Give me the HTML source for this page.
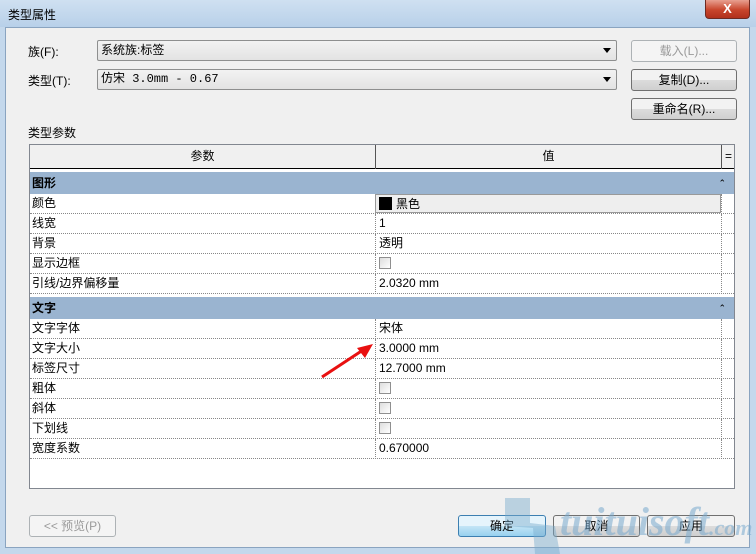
<!DOCTYPE html>
<html><head><meta charset="utf-8"><style>
*{box-sizing:border-box;margin:0;padding:0}
body{width:756px;height:554px;overflow:hidden;background:#c4d8ec;font:12px "Liberation Sans","Noto Sans CJK SC",sans-serif;color:#000;position:relative}
.a{position:absolute}
.title{left:0;top:0;width:756px;height:27px;background:linear-gradient(#cfe0f1,#b8d0e9)}
.client{left:5px;top:27px;width:745px;height:521px;background:#f0f0f0;border:1px solid #8aa4c0}
.btn{position:absolute;height:22px;border:1px solid #707070;border-radius:3px;background:linear-gradient(#f2f2f2 50%,#dcdcdc 50%,#cfcfcf);text-align:center;line-height:20px;font-size:12px}
.dis{border-color:#adb2b5;color:#9a9a9a;background:#f4f4f4}
.combo{position:absolute;left:97px;width:520px;height:21px;border:1px solid #8e8f8f;border-radius:2px;background:linear-gradient(#f2f2f2,#e3e3e3);line-height:19px;padding-left:3px}
.combo:after{content:"";position:absolute;right:5px;top:7px;border:4px solid transparent;border-top:5px solid #000}
.tbl{left:29px;top:144px;width:706px;height:345px;background:#fff;border:1px solid #828790}
.row{position:absolute;left:0;width:704px;height:20px;border-bottom:1px dotted #888;line-height:19px}
.row .k{position:absolute;left:2px}
.row .v{position:absolute;left:345px;height:20px;border-left:1px dotted #888;padding-left:3px;width:347px}
.row .e{position:absolute;left:691px;width:1px;height:20px;border-left:1px dotted #888}
.sec{position:absolute;left:0;width:704px;height:22px;background:#9ab4d0;font-weight:bold;line-height:22px;padding-left:2px}
.sec span{position:absolute;right:8px;font-size:9px;font-weight:normal}
.cb{display:inline-block;width:12px;height:12px;border:1px solid #8f8f8f;background:linear-gradient(135deg,#ddd,#fff);vertical-align:middle;margin-top:-2px}
</style></head><body>
<div class="a title"></div>
<div class="a" style="left:8px;top:6px;font-size:12px">类型属性</div>
<div class="a" style="left:705px;top:0;width:45px;height:19px;border:1px solid #6d2a22;border-top:none;border-radius:0 0 4px 4px;background:linear-gradient(#e8a090,#c8452c 55%,#b0301c);color:#fff;font-weight:bold;text-align:center;line-height:18px;font-size:13px">X</div>
<div class="a client"></div>
<div class="a" style="left:28px;top:43px">族(F):</div>
<div class="a" style="left:28px;top:72px">类型(T):</div>
<div class="combo" style="top:40px">系统族:标签</div>
<div class="combo" style="top:69px;font-family:'Liberation Mono','Noto Sans CJK SC',monospace">仿宋 3.0mm - 0.67</div>
<div class="btn dis" style="left:631px;top:40px;width:106px">载入(L)...</div>
<div class="btn" style="left:631px;top:69px;width:106px">复制(D)...</div>
<div class="btn" style="left:631px;top:98px;width:106px">重命名(R)...</div>
<div class="a" style="left:28px;top:124px">类型参数</div>
<div class="a tbl">
 <div class="a" style="left:0;top:0;width:704px;height:24px;background:#f0f0f0;border-bottom:1px solid #000"></div>
 <div class="a" style="left:0;top:0;width:346px;height:24px;text-align:center;line-height:23px;border-right:1px solid #555">参数</div>
 <div class="a" style="left:346px;top:0;width:346px;height:24px;text-align:center;line-height:23px;border-right:1px solid #555">值</div>
 <div class="a" style="left:693px;top:0;width:11px;height:24px;text-align:center;line-height:23px">=</div>
 <div class="sec" style="top:27px">图形<span>⌃</span></div>
 <div class="row" style="top:49px"><span class="k">颜色</span><span class="v" style="background:#eee;border:1px solid #999;height:19px;width:346px"><i style="display:inline-block;width:13px;height:13px;background:#000;vertical-align:middle;margin:-2px 4px 0 0"></i>黑色</span><span class="e"></span></div>
 <div class="row" style="top:69px"><span class="k">线宽</span><span class="v">1</span><span class="e"></span></div>
 <div class="row" style="top:89px"><span class="k">背景</span><span class="v">透明</span><span class="e"></span></div>
 <div class="row" style="top:109px"><span class="k">显示边框</span><span class="v"><i class="cb"></i></span><span class="e"></span></div>
 <div class="row" style="top:129px"><span class="k">引线/边界偏移量</span><span class="v">2.0320 mm</span><span class="e"></span></div>
 <div class="sec" style="top:152px">文字<span>⌃</span></div>
 <div class="row" style="top:174px"><span class="k">文字字体</span><span class="v">宋体</span><span class="e"></span></div>
 <div class="row" style="top:194px"><span class="k">文字大小</span><span class="v">3.0000 mm</span><span class="e"></span></div>
 <div class="row" style="top:214px"><span class="k">标签尺寸</span><span class="v">12.7000 mm</span><span class="e"></span></div>
 <div class="row" style="top:234px"><span class="k">粗体</span><span class="v"><i class="cb"></i></span><span class="e"></span></div>
 <div class="row" style="top:254px"><span class="k">斜体</span><span class="v"><i class="cb"></i></span><span class="e"></span></div>
 <div class="row" style="top:274px"><span class="k">下划线</span><span class="v"><i class="cb"></i></span><span class="e"></span></div>
 <div class="row" style="top:294px"><span class="k">宽度系数</span><span class="v">0.670000</span><span class="e"></span></div>
</div>
<svg class="a" style="left:315px;top:340px" width="65" height="45"><line x1="7" y1="37" x2="48" y2="10" stroke="#e81010" stroke-width="3"/><polygon points="58,4 42,8 50,18" fill="#e81010"/></svg>
<div class="btn dis" style="left:29px;top:515px;width:87px">&lt;&lt; 预览(P)</div>
<div class="btn" style="left:458px;top:515px;width:88px;border-color:#3c7fb1;background:linear-gradient(#e5f4fc 50%,#c4e5f6 50%,#98d1ef)">确定</div>
<div class="btn" style="left:553px;top:515px;width:87px">取消</div>
<div class="btn" style="left:647px;top:515px;width:88px">应用</div>
<div class="a" style="left:560px;top:498px;font:italic bold 40px 'Liberation Serif',serif;color:rgba(120,170,205,.55)">tuituisoft<span style="font-size:22px">.com</span></div>
<svg class="a" style="left:505px;top:498px" width="60" height="56"><polygon points="0,0 25,0 25,25 50,28 55,56 30,56 28,30 0,28" fill="rgba(120,170,205,.45)"/></svg>
</body></html>
